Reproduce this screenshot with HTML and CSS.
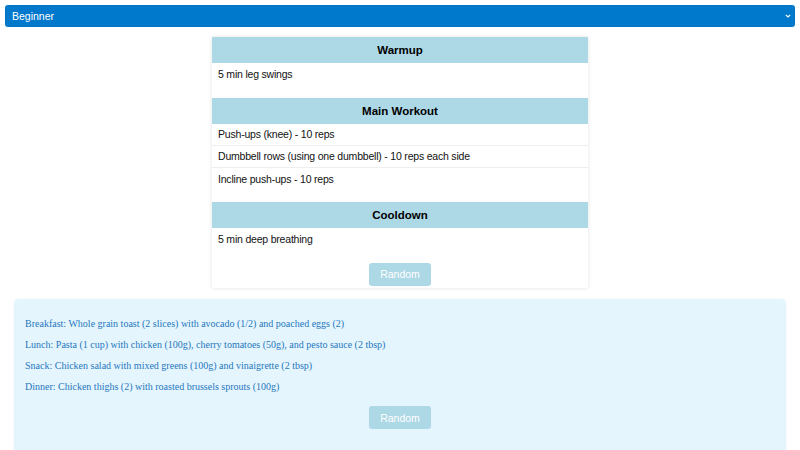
FILE: index.html
```html
<!DOCTYPE html>
<html>
<head>
<meta charset="utf-8">
<link rel="stylesheet" href="styles.css">
</head>
<body>
<div class="level">
  <span class="level-text">Beginner</span>
  <svg class="chev" width="6" height="4" viewBox="0 0 6 4"><path d="M0.8 0.8 L3 3 L5.2 0.8" fill="none" stroke="#fff" stroke-width="1.2"/></svg>
</div>
<div class="card">
  <div class="section">
    <div class="sec-head">Warmup</div>
    <div class="item">5 min leg swings</div>
  </div>
  <div class="section">
    <div class="sec-head">Main Workout</div>
    <div class="item">Push-ups (knee) - 10 reps</div>
    <div class="item">Dumbbell rows (using one dumbbell) - 10 reps each side</div>
    <div class="item">Incline push-ups - 10 reps</div>
  </div>
  <div class="section">
    <div class="sec-head">Cooldown</div>
    <div class="item">5 min deep breathing</div>
  </div>
  <div class="btn-row"><button class="btn">Random</button></div>
</div>
<div class="meals">
  <p class="meal">Breakfast: Whole grain toast (2 slices) with avocado (1/2) and poached eggs (2)</p>
  <p class="meal">Lunch: Pasta (1 cup) with chicken (100g), cherry tomatoes (50g), and pesto sauce (2 tbsp)</p>
  <p class="meal">Snack: Chicken salad with mixed greens (100g) and vinaigrette (2 tbsp)</p>
  <p class="meal">Dinner: Chicken thighs (2) with roasted brussels sprouts (100g)</p>
  <div class="btn-row meal-btn"><button class="btn">Random</button></div>
</div>
</body>
</html>
```
FILE: styles.css
```css
html, body {
  margin: 0;
  padding: 0;
  background: #fff;
  overflow: hidden;
}
body {
  padding: 5px;
  font-family: "Liberation Sans", Arial, sans-serif;
}
.level {
  height: 22px;
  background: #0078cc;
  border-radius: 3px;
  display: flex;
  align-items: center;
  justify-content: space-between;
  padding: 0 4px 0 7px;
  color: #fff;
  font-size: 10.5px;
}
.card {
  width: 376px;
  margin: 10px auto 0;
  background: #fff;
  box-shadow: 0 0 4px rgba(0,0,0,0.12);
  padding-bottom: 2px;
}
.section { margin-bottom: 12.5px; }
.sec-head {
  height: 26px;
  background: #add8e6;
  display: flex;
  align-items: center;
  justify-content: center;
  font-weight: bold;
  font-size: 11.5px;
  color: #000;
}
.item {
  height: 22px;
  display: flex;
  align-items: center;
  padding: 0 6px;
  font-size: 10.5px;
  letter-spacing: -0.2px;
  color: #111;
  border-bottom: 1px solid #eee;
  box-sizing: border-box;
}
.item:last-child { border-bottom: none; }
.btn-row {
  display: flex;
  justify-content: center;
}
.btn {
  width: 62px;
  height: 23px;
  background: #add8e6;
  color: #fff;
  border: none;
  border-radius: 3px;
  font-family: "Liberation Sans", Arial, sans-serif;
  font-size: 10.5px;
  padding: 0;
}
.meals {
  margin: 11px 9px 0;
  background: #e4f5fe;
  border-radius: 5px;
  padding: 18.5px 11px 30px;
  box-shadow: 0 0 3px rgba(0,0,0,0.05);
}
.meal {
  margin: 0 0 8px;
  font-family: "Liberation Serif", "Times New Roman", serif;
  font-size: 10px;
  line-height: 13px;
  color: #2677bd;
}
.meal-btn { margin-top: 13px; }
```
